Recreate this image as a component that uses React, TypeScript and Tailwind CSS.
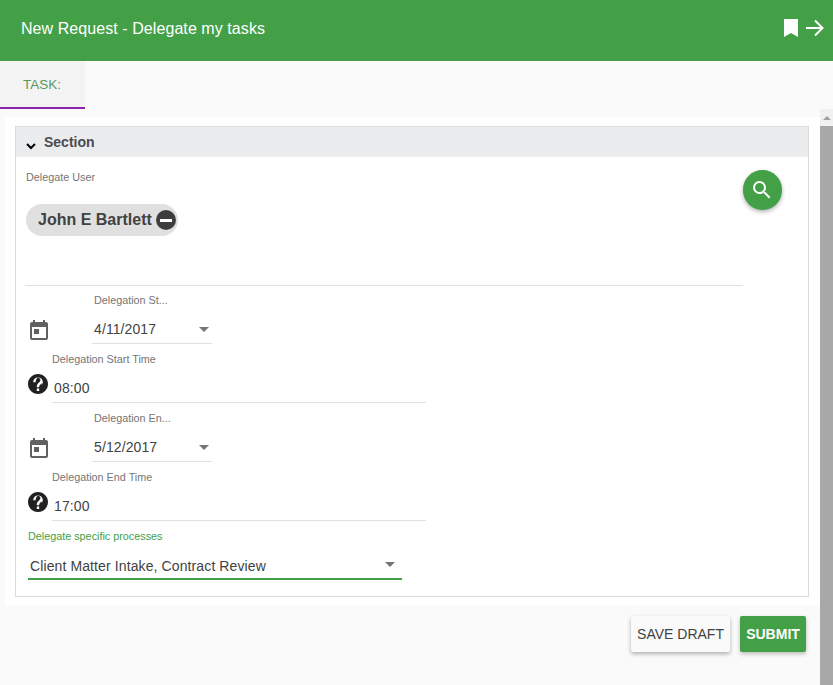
function CalendarIcon() {
  return (
    <svg width="24" height="24" viewBox="0 0 24 24" fill="#616161">
      <path d="M19 3h-1V1h-2v2H8V1H6v2H5a2 2 0 0 0-2 2v14a2 2 0 0 0 2 2h14a2 2 0 0 0 2-2V5a2 2 0 0 0-2-2zm0 16H5V8h14v11zM7 10h5v5H7z" />
    </svg>
  );
}

function HelpIcon() {
  return (
    <svg width="24" height="24" viewBox="0 0 24 24" fill="#212121">
      <path d="M12 2C6.48 2 2 6.48 2 12s4.48 10 10 10 10-4.48 10-10S17.52 2 12 2zm1.2 17h-2.4v-2.4h2.4V19zm2.5-7.8-1.1 1.1c-.9.9-1.4 1.6-1.4 3h-2.4v-.6c0-1.3.5-2.5 1.4-3.4l1.5-1.5c.4-.4.7-1 .7-1.6 0-1.3-1.1-2.4-2.4-2.4S9.6 8.9 9.6 10.2H7.2a4.8 4.8 0 0 1 9.6 0c0 .4-.4 1.9-1.1 3z" />
    </svg>
  );
}

function Caret() {
  return <div className="w-0 h-0 border-x-[5px] border-x-transparent border-t-[5px] border-t-[#757575]" />;
}

function DateTimeGroup({
  dateLabel,
  date,
  timeLabel,
  time,
}: {
  dateLabel: string;
  date: string;
  timeLabel: string;
  time: string;
}) {
  return (
    <div>
      <div className="flex h-[59px]">
        <div className="w-[66px] pl-[1px] pt-[26px] shrink-0">
          <CalendarIcon />
        </div>
        <div className="w-[120px]">
          <div className="pl-[2px] h-[17px] text-[10.8px] leading-[14px] text-[#757575]">{dateLabel}</div>
          <div className="h-[34px] border-b border-[#e0e0e0] flex justify-between pl-[2px] pr-[3px] pt-[9px] text-[14px] leading-[20px] tracking-[0.1px] text-[#424242]">
            <span>{date}</span>
            <div className="mt-[8px]">
              <Caret />
            </div>
          </div>
        </div>
      </div>
      <div className="flex h-[59px]">
        <div className="w-[26px] pt-[20px] shrink-0">
          <HelpIcon />
        </div>
        <div className="w-[374px]">
          <div className="h-[14px] text-[10.8px] leading-[14px] text-[#757575]">{timeLabel}</div>
          <div className="h-[37px] border-b border-[#e0e0e0] pl-[2px] pt-[12px] text-[14px] leading-[20px] tracking-[0.1px] text-[#424242]">
            {time}
          </div>
        </div>
      </div>
    </div>
  );
}

export default function App() {
  return (
    <div className="h-[685px] w-[833px] overflow-hidden bg-[#fafafa] flex flex-col font-['Liberation_Sans',sans-serif]">
      {/* Header */}
      <div className="h-[61px] shrink-0 bg-[#43a047] flex items-center justify-between pl-[21px] pr-[9px] text-white">
        <h1 className="text-[16px] tracking-[0.07px] -mt-[4px]">New Request - Delegate my tasks</h1>
        <div className="flex items-center gap-[7px] -mt-[6px]">
          <svg width="16" height="18" viewBox="0 0 16 18" fill="white">
            <path d="M1 0h14v18l-7-4-7 4z" />
          </svg>
          <svg width="18" height="18" viewBox="0 0 18 18" fill="none" stroke="white" strokeWidth="2">
            <path d="M0 9h16M9 1.5 16.5 9 9 16.5" />
          </svg>
        </div>
      </div>

      {/* Tabs */}
      <div className="h-[48px] shrink-0">
        <div className="w-[85px] h-[48px] bg-[#f3f3f3] border-b-2 border-[#8e24aa] flex items-center justify-center pr-[1px] pt-[3px] text-[13.5px] text-[#5a9a5e]">
          TASK:
        </div>
      </div>

      <div className="flex flex-1 min-h-0">
        <div className="flex-1 pl-[5px] pt-[8px]">
          <div className="bg-white px-[10px] pt-[9px] pb-[9px] h-[489px]">
            {/* Section card */}
            <div className="border border-[#dcdcdc] h-[471px] w-[794px]">
              <div className="h-[30px] bg-[#ebecee] flex items-center pl-[7px] gap-[5px]">
                <svg width="16" height="16" viewBox="0 0 24 24" fill="none" stroke="black" strokeWidth="3" className="mt-[8px]">
                  <path d="m6 9 6 6 6-6" />
                </svg>
                <span className="text-[14px] leading-[20px] font-bold text-[#4a4a4f]">Section</span>
              </div>

              <div className="pl-[10px] pt-[13px] relative">
                <button className="absolute left-[727px] top-[13px] w-[39px] h-[40px] rounded-full bg-[#43a047] flex items-center justify-center shadow-[0_2px_4px_rgba(0,0,0,0.3)]">
                  <svg width="24" height="24" viewBox="0 0 24 24" fill="white" className="-ml-[2px]">
                    <path d="M15.5 14h-.79l-.28-.27A6.471 6.471 0 0 0 16 9.5 6.5 6.5 0 1 0 9.5 16c1.61 0 3.09-.59 4.23-1.57l.27.28v.79l5 4.99L20.49 19l-4.99-5zm-6 0C7.01 14 5 11.99 5 9.5S7.01 5 9.5 5 14 7.01 14 9.5 11.99 14 9.5 14z" />
                  </svg>
                </button>

                <div className="text-[10.8px] leading-[14px] h-[15px] text-[#757575]">Delegate User</div>
                <div className="mt-[19px] h-[32px] w-[152px] rounded-full bg-[#e0e0e0] flex items-center pl-[12px] pr-[2px] justify-between">
                  <span className="text-[16px] font-bold text-[#424242]">John E Bartlett</span>
                  <div className="w-[20px] h-[20px] rounded-full bg-[#3d3d3d] flex items-center justify-center">
                    <div className="w-[12px] h-[3px] bg-white" />
                  </div>
                </div>
                <div className="mt-[49px] -ml-[1px] w-[718px] border-b border-[#e0e0e0]" />

                <div className="mt-[7px]">
                  <DateTimeGroup dateLabel="Delegation St..." date="4/11/2017" timeLabel="Delegation Start Time" time="08:00" />
                  <DateTimeGroup dateLabel="Delegation En..." date="5/12/2017" timeLabel="Delegation End Time" time="17:00" />
                </div>

                <div className="ml-[2px] w-[374px]">
                  <div className="h-[14px] text-[10.8px] leading-[14px] text-[#43a047]">Delegate specific processes</div>
                  <div className="mt-[13px] h-[24px] border-b-2 border-[#43a047] flex justify-between pl-[2px] pr-[7px] text-[14px] leading-[20px] tracking-[0.11px] text-[#424242]">
                    <span>Client Matter Intake, Contract Review</span>
                    <div className="mt-[6px]">
                      <Caret />
                    </div>
                  </div>
                </div>
              </div>
            </div>
          </div>

          {/* Actions */}
          <div className="flex justify-end gap-[10px] pr-[14px] pt-[10px] text-[14px]">
            <button className="w-[99px] h-[36px] rounded-[2px] bg-[#fafafa] text-[#424242] shadow-[0_2px_4px_rgba(0,0,0,0.3)]">SAVE DRAFT</button>
            <button className="w-[66px] h-[36px] rounded-[2px] bg-[#43a047] text-white font-bold shadow-[0_2px_4px_rgba(0,0,0,0.25)]">SUBMIT</button>
          </div>
        </div>

        {/* Scrollbar */}
        <div className="w-[13px] shrink-0 flex flex-col bg-[#f1f1f1]">
          <div className="h-[17px] flex items-center justify-center">
            <div className="w-0 h-0 border-x-[4px] border-x-transparent border-b-[4px] border-b-[#a0a0a0]" />
          </div>
          <div className="flex-1 bg-[#a8a8a8]" />
        </div>
      </div>
    </div>
  );
}
